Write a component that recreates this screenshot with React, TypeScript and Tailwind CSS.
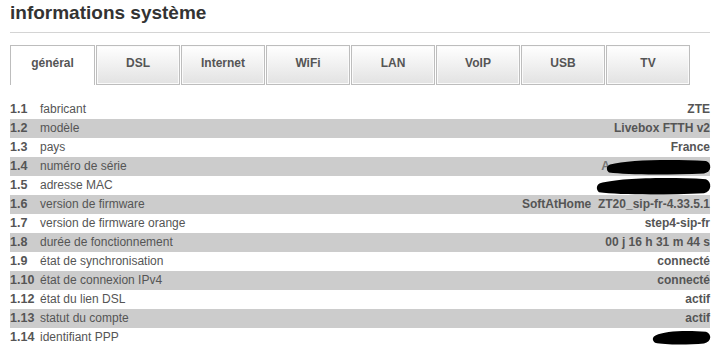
import React from "react";

const tabs = ["général", "DSL", "Internet", "WiFi", "LAN", "VoIP", "USB", "TV"];

type Row = { n: string; label: string; value: React.ReactNode };

const Blob = ({ w, h, extra }: { w: number; h: number; extra?: string }) => (
  <svg width={w} height={h} viewBox={`0 0 ${w} ${h}`} className={`inline-block align-middle -mr-[2px] ${extra ?? ""}`}>
    <path
      d={`M4 ${h * 0.35} C ${w * 0.2} ${h * 0.05}, ${w * 0.6} 0, ${w - 6} ${h * 0.12} C ${w} ${h * 0.25}, ${w} ${h * 0.8}, ${w - 8} ${h * 0.9} C ${w * 0.6} ${h}, ${w * 0.2} ${h}, 3 ${h * 0.85} C 0 ${h * 0.7}, 0 ${h * 0.45}, 4 ${h * 0.35} Z`}
      fill="#000"
    />
  </svg>
);

const rows: Row[] = [
  { n: "1.1", label: "fabricant", value: "ZTE" },
  { n: "1.2", label: "modèle", value: "Livebox FTTH v2" },
  { n: "1.3", label: "pays", value: "France" },
  {
    n: "1.4",
    label: "numéro de série",
    value: (
      <span className="inline-flex items-center">
        <span className="text-[#777]">A</span>
        <Blob w={106} h={16} extra="-ml-[4px]" />
      </span>
    ),
  },
  { n: "1.5", label: "adresse MAC", value: <Blob w={116} h={18} /> },
  {
    n: "1.6",
    label: "version de firmware",
    value: <span>SoftAtHome&nbsp;&nbsp;ZT20_sip-fr-4.33.5.1</span>,
  },
  { n: "1.7", label: "version de firmware orange", value: "step4-sip-fr" },
  { n: "1.8", label: "durée de fonctionnement", value: "00 j 16 h 31 m 44 s" },
  { n: "1.9", label: "état de synchronisation", value: "connecté" },
  { n: "1.10", label: "état de connexion IPv4", value: "connecté" },
  { n: "1.12", label: "état du lien DSL", value: "actif" },
  { n: "1.13", label: "statut du compte", value: "actif" },
  { n: "1.14", label: "identifiant PPP", value: <Blob w={60} h={15} /> },
];

export default function App() {
  return (
    <div
      className="w-[720px] h-[355px] bg-white overflow-hidden px-[10px] text-[#555]"
      style={{ fontFamily: '"Liberation Sans", Arial, sans-serif' }}
    >
      <h1 className="text-[19px] font-bold text-[#333] leading-[22px] pt-[2px] h-[32px]">
        informations système
      </h1>
      <div className="h-px bg-[#d4d4d4] w-[700px]" />
      <div className="flex gap-px mt-[12px] h-[40px]">
        {tabs.map((t, i) =>
          i === 0 ? (
            <div
              key={t}
              className="w-[85px] h-[40px] border border-b-0 border-[#bdbdbd] bg-white flex items-center justify-center text-[12px] font-bold text-[#555]"
            >
              <span className="-mt-[5px]">{t}</span>
            </div>
          ) : (
            <div
              key={t}
              className="w-[84px] h-[40px] border border-[#bdbdbd] shadow-[inset_0_0_0_1px_#fafafa] bg-gradient-to-b from-white to-[#e2e2e2] flex items-center justify-center text-[12px] font-bold text-[#555]"
            >
              <span className="-mt-[5px]">{t}</span>
            </div>
          )
        )}
      </div>
      <div className="mt-[15px] w-[700px]">
        {rows.map((r, i) => (
          <div
            key={r.n}
            className={`flex items-center h-[19px] text-[12px] leading-[19px] ${i % 2 === 1 ? "bg-[#cccccc]" : ""}`}
          >
            <span className="w-[30px] font-bold text-[#555] text-[12.5px]">{r.n}</span>
            <span className="flex-1 text-[#555]">{r.label}</span>
            <span className="font-bold text-[#555] flex items-center">{r.value}</span>
          </div>
        ))}
      </div>
    </div>
  );
}
